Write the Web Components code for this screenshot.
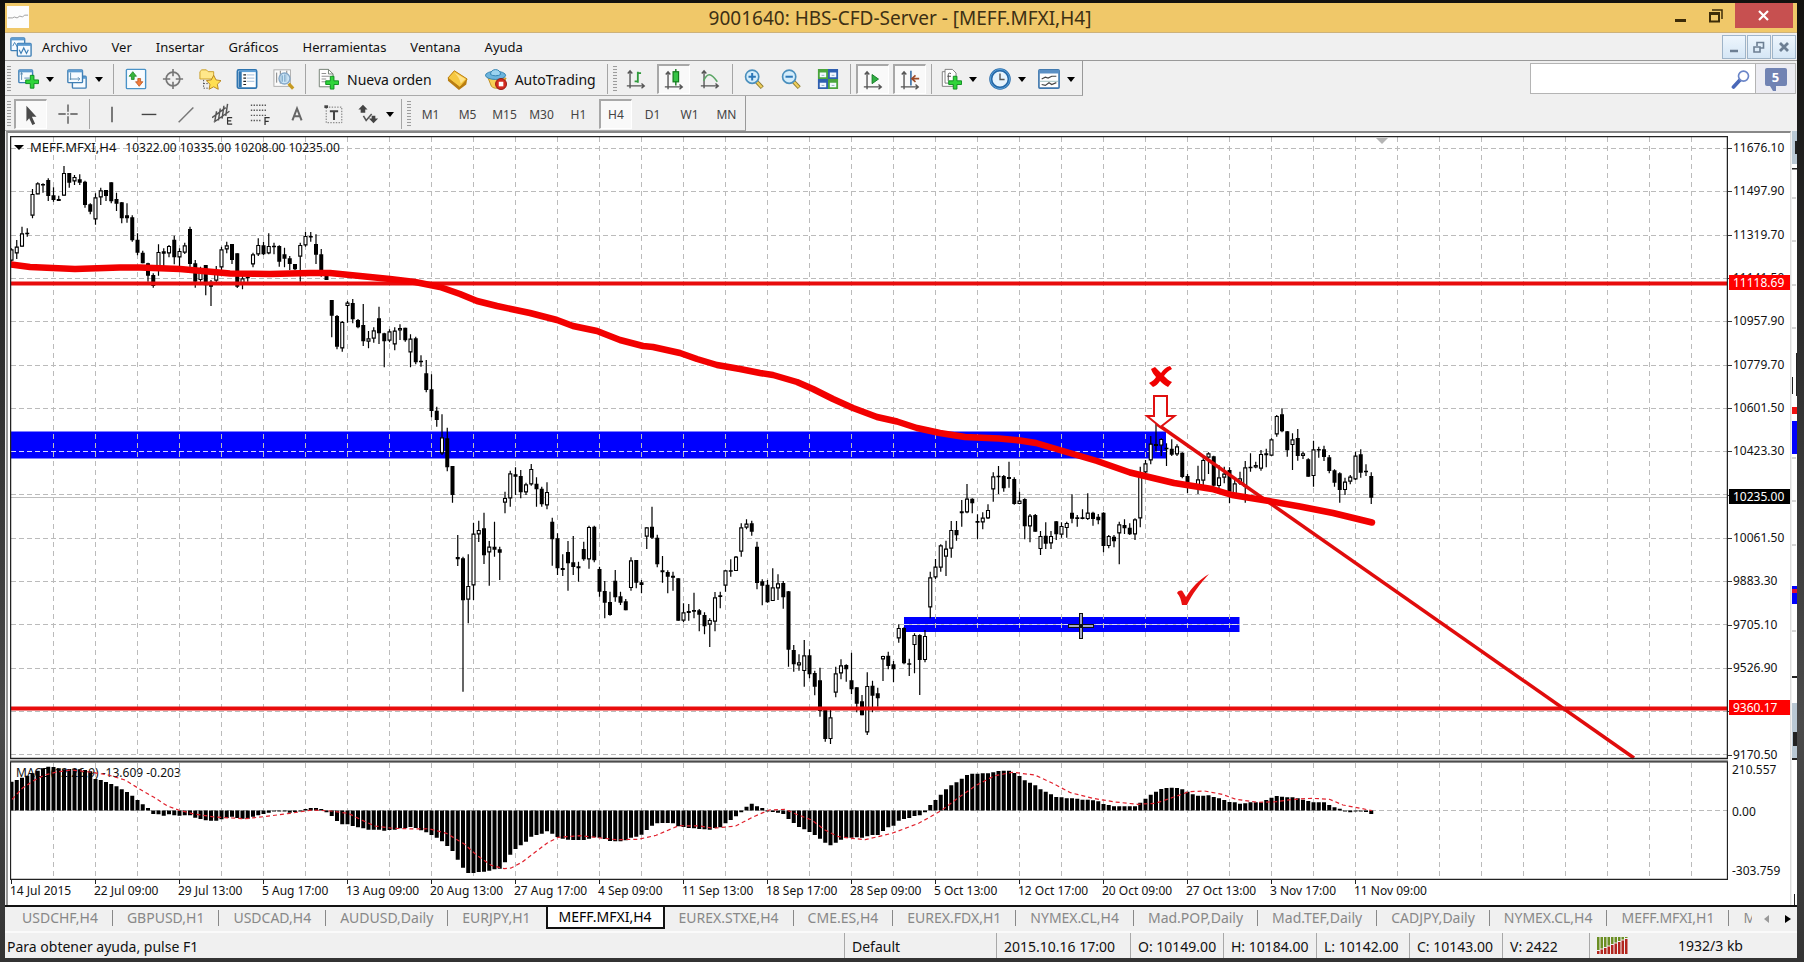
<!DOCTYPE html>
<html lang="es">
<head>
<meta charset="utf-8">
<title>9001640: HBS-CFD-Server - [MEFF.MFXI,H4]</title>
<style>
html,body{margin:0;height:100%}
body{background:linear-gradient(#12110f,#2a2a2a 30%,#4a4a4a 75%,#333);font-family:"Noto Sans","Open Sans",sans-serif;color:#111}
</style>
</head>
<body>
<mt-window></mt-window>
<script>
const def=(name,html,init)=>customElements.define(name,class extends HTMLElement{
  constructor(){super();const t=document.createElement('template');t.innerHTML=html;
    this.attachShadow({mode:'open'}).append(t.content.cloneNode(true));}
  connectedCallback(){if(init&&!this.ready){this.ready=true;init(this,this.shadowRoot);}}
});

/* ---------- icons, all on a 24 x 24 grid ---------- */
const plus=(x,y)=>`<path transform="translate(${x} ${y})" d="M5 0h4v5h5v4h-5v5h-4v-5h-5v-4h5z" fill="#2fd43a" stroke="#0b8a1c"/>`;
const axes='<path d="M5.500 3v19M2 19.500h19M3 6l2.500-3 2.500 3M18 17l3 2.500-3 2.500" fill="none" stroke="#555" stroke-width="1.500"/>';
const lens=s=>`<path d="M14 14l7 7.500" stroke="#8c7a30" stroke-width="4.500"/><path d="M14.500 14.500l6 6.500" stroke="#f0cf5c" stroke-width="2.500"/><circle cx="10" cy="9.500" r="7.200" fill="#d4edfb" stroke="#4a8fbd" stroke-width="1.800"/><path d="${s}" stroke="#2d78b8" stroke-width="2.200"/>`;
const win=(x,y,w,h)=>`<rect x="${x}" y="${y}" width="${w}" height="${h}" rx="1" fill="#f6fbff" stroke="#3f7fb5" stroke-width="1.500"/><path d="M${x} ${y+1.5}h${w}" stroke="#5c9bd0" stroke-width="2.500"/>`;
const ICONS={
 app:'<rect width="24" height="24" fill="#fdfdfd"/><path d="M1 13h5l2-1 3 1 3-2 3 1 2-2h4" fill="none" stroke="#999"/>',
 doc:win(1,2,15,14)+'<path d="M3 11l2-4 3 5 2-4" fill="none" stroke="#3f7fb5"/>'+win(8,8,15,14)+'<path d="M10 15l2 4 3-6 3 6 2-4" fill="none" stroke="#3f7fb5" stroke-width="1.300"/>',
 newchart:win(2,2,15,14)+'<path d="M5 5v8M4 7l1-2 1 2M8 11h6" fill="none" stroke="#5487ad"/>'+plus(9.5,8),
 profiles:win(7,9,15,13)+win(2,2,16,14)+'<path d="M5 5v8M4 12h11M13 10l2 2-2 2" fill="none" stroke="#5487ad"/>',
 market:'<rect x="1.500" y="1.500" width="21" height="21" rx="1" fill="#f8fcff" stroke="#4a93c8" stroke-width="1.500"/><path d="M8.500 4l4 5h-2.500v3.500h-3v-3.500h-2.500z" fill="#38b53d" stroke="#16801d" stroke-width=".8"/><path d="M15.500 20l4-5h-2.500v-3.500h-3v3.500h-2.500z" fill="#f07d3e" stroke="#b84b12" stroke-width=".8"/>',
 target:'<circle cx="12" cy="12" r="7.500" fill="none" stroke="#777" stroke-width="1.800"/><path d="M12 1v8M12 15v8M1 12h8M15 12h8" stroke="#777" stroke-width="1.800"/>',
 folder:'<path d="M1 4l2-2h5l2 2h6v8h-15z" fill="#ffe88a" stroke="#c79b22"/><path d="M5 13v9h6M5 17h6" fill="none" stroke="#444" stroke-dasharray="1.500 1.500"/><path d="M16 8l2.600 5 5.400.8-4 3.900 1 5.500-5-2.700-5 2.700 1-5.500-4-3.900 5.400-.8z" fill="#ffdf52" stroke="#b5811a"/>',
 list:'<rect x="1.500" y="2" width="21" height="20" rx="1.500" fill="#fff" stroke="#2f75b0" stroke-width="1.800"/><path d="M3 3.500h19" stroke="#5fa1d8" stroke-width="2"/><path d="M4.500 4v17" stroke="#2f75b0" stroke-width="3.500"/><path d="M8 7.500h3M8 11h3M8 14.500h3M8 18h3" stroke="#222" stroke-width="1.300"/><path d="M12 7.500h8M12 11h8M12 14.500h8" stroke="#b5cbe2" stroke-width="1.300"/>',
 tester:'<rect x="1" y="2" width="18" height="18" fill="#fbfbfb" stroke="#aaa"/><path d="M4 5v11M8 3v14M15 3v12" stroke="#777"/><path d="M17 17l5 5.500" stroke="#c79b22" stroke-width="3.500"/><circle cx="12.500" cy="11.500" r="6" fill="#bfe0f8" fill-opacity=".8" stroke="#85a8c8" stroke-width="1.500"/><path d="M10 8v7M13 7v8" stroke="#5e8fb5"/>',
 order:'<path d="M2.500 1.500h10l5 5v14h-15z" fill="#fff" stroke="#6d7a6d"/><path d="M12.500 1.500v5h5" fill="none" stroke="#6d7a6d"/><path d="M5 6h5M5 9h9M5 12h5M5 15h4" stroke="#888"/>'+plus(9.5,9),
 gold:'<path d="M8 3l14 9-1 6-8 6-12-10v-3z" fill="#b97d10"/><path d="M8 3l14 9-8 9-13-10z" fill="#f6c842" stroke="#b97d10"/><path d="M8 5l12 7-5 5c-1-5-4-9-7-12z" fill="#ffe38a"/>',
 auto:'<path d="M3 10l4 10c3 3 9 3 12-1l4-8z" fill="#f7cf56" stroke="#bb8a1f"/><ellipse cx="11.500" cy="8" rx="11" ry="4.500" fill="#6bb4dd" stroke="#2f7fae"/><path d="M6 7c0-7 11-7 11 0-2 2-9 2-11 0z" fill="#9bd3f0" stroke="#2f7fae"/><circle cx="17.500" cy="17.500" r="6" fill="#d32b20" stroke="#8f140c"/><rect x="15" y="15" width="5" height="5" fill="#fff"/>',
 bars:axes+'<path d="M14 4v12M10.500 14.500h3.500M14 5.500h3.500" stroke="#2f9a3c" stroke-width="2" fill="none"/>',
 candle:axes+'<path d="M14 0v18" stroke="#127a1c" stroke-width="1.500"/><rect x="11" y="3" width="6" height="11" fill="#35c445" stroke="#127a1c" stroke-width="1.300"/>',
 line:axes+'<path d="M5 14c4-9 8-9 15 1" stroke="#5aa564" stroke-width="1.700" fill="none"/>',
 zoomin:lens('M6 9.500h8M10 5.500v8'),zoomout:lens('M6 9.500h8'),
 tile:'<path fill="#4aa53c" d="M1 1h11v11h-11zM12 12h11v11h-11z"/><path fill="#2f5fb0" d="M12 1h11v11h-11zM1 12h11v11h-11z"/><path fill="#f3f9ff" d="M3 5h7v5h-7zM14 5h7v5h-7zM3 16h7v5h-7zM14 16h7v5h-7z"/><path d="M5 8h3M16 8h3M5 19h3M16 19h3" stroke="#8ab"/>',
 scroll:axes+'<path d="M11 6l7 5-7 5z" fill="#2fb042" stroke="#147a24"/>',
 shift:axes+'<path d="M13 2v16" stroke="#3a6ea5" stroke-width="1.800"/><path d="M22 10.500h-7M18 7l-4 3.500 4 3.500" stroke="#9c4a26" stroke-width="1.800" fill="none"/>',
 indic:'<path d="M5.500 4h-3v16h12v-5" fill="#fff" stroke="#777"/><path d="M5.500 1.500h8l4 4v11h-12z" fill="#fff" stroke="#777"/><path d="M12 6c-3-1-3 0-3 3v5M8 9h4" stroke="#444" fill="none"/>'+plus(9.5,9),
 clock:'<circle cx="12" cy="12" r="10" fill="#e6f3fc" stroke="#2468a8" stroke-width="3.500"/><circle cx="12" cy="12" r="10.500" fill="none" stroke="#5fa6dd"/><path d="M12 6v6.500h5" stroke="#555" stroke-width="1.500" fill="none"/>',
 template:'<rect x="1" y="2" width="22" height="20" rx="1" fill="#fff" stroke="#3f77ad" stroke-width="1.800"/><path d="M1 4h22" stroke="#5a8fc4" stroke-width="4"/><path d="M4 12l4-2 3 1 4-2 5 0M4 18l4 1 4-3 3 2 5-2" stroke="#444" stroke-width="1.300" fill="none"/><path d="M2 14.500h20" stroke="#9bb"/>',
 cursor:'<path d="M7 2l11 12h-5l3.500 7.500-3 1.500-3.500-7.500-3 3.500z" fill="#4a4a4a"/>',
 cross:'<path d="M12 1.500v8M12 14.500v8M1.500 12h8M14.500 12h8" stroke="#555" stroke-width="1.500"/><path d="M12 11.200v1.600" stroke="#555" stroke-width="1.500"/>',
 vline:'<path d="M12 4v17" stroke="#444" stroke-width="1.500"/>',
 hline:'<path d="M4 12.500h16" stroke="#444" stroke-width="1.500"/>',
 trend:'<path d="M4 21l16-16" stroke="#777" stroke-width="1.600"/>',
 channel:'<path d="M0 16l15-11M2 21l17-12M5 9l-2 11M9 6l-2 13M13 3l-2 14M17 1l-2 13" stroke="#555" stroke-width="1.600"/><path d="M17 16h5M17 19.500h4M17 23h5M17 15.500v8" stroke="#333" stroke-width="1.300"/>',
 fibo:'<path d="M2 2.500h18M2 8h18M2 13.500h18M2 19h11" stroke="#555" stroke-width="1.600" stroke-dasharray="1.500 1.500"/><path d="M17.500 24v-8h5M17.500 20h4" stroke="#333" stroke-width="1.400" fill="none"/>',
 text:'<path d="M7 19l5-13 5 13M8.500 14.500h7" stroke="#666" stroke-width="2.200" fill="none"/>',
 label:'<rect x="3.500" y="4.500" width="17" height="17" fill="none" stroke="#666" stroke-dasharray="1.500 1.500"/><path d="M7.500 9h9M12 9v9.500" stroke="#444" stroke-width="2.200"/><rect x="1.500" y="2.500" width="4" height="3" fill="#444"/>',
 shapes:'<path d="M6.500 2l5 5-2.500 0v3.500h-5v-3.500h-2.500z" fill="#444"/><path d="M18 22l-5-5h3v-3h4v3h3z" fill="#444"/><path d="M7 14l3 5 6-7" stroke="#555" stroke-width="1.700" fill="none"/>',
 search:'<path d="M3 21.500l8-8.500" stroke="#4a68b8" stroke-width="4.500" stroke-linecap="round"/><circle cx="15" cy="8.500" r="6" fill="#fff" stroke="#6b86c8" stroke-width="2"/>',
};
def('tool-icon','<style>:host{display:block;width:22px;height:24px;flex:none}svg{display:block;width:100%;height:100%}</style><svg viewBox="0 0 24 24" aria-hidden="true"></svg>',
 (e,r)=>{r.querySelector('svg').innerHTML=ICONS[e.getAttribute('name')];});

def('tool-button',`<style>
:host{display:flex;width:37px;height:34px;flex:none}
:host([drop]){width:49px}:host([drop=narrow]){width:46px}:host([wide]){width:auto}
button{font:14px "Noto Sans",sans-serif;color:#111;flex:1;margin:1px;border:0;background:none;padding:0;display:flex;align-items:center;justify-content:center;gap:7px;white-space:nowrap}
:host([drop]) button{justify-content:flex-start;padding-left:4px}
:host([wide]) button{padding:0 7px;gap:8px}
:host([time]) button{font-size:12px;color:#444}
:host([pressed]) button{margin:2px;background:#f9f9f9;border-top:2px solid #a8a8a8;border-left:2px solid #a8a8a8;border-right:1px solid #fff;border-bottom:1px solid #fff}
i{display:none;border:4px solid transparent;border-top:5px solid #000;border-bottom:0}
:host([drop]) i{display:block}
</style><button type="button"><slot></slot><i></i></button>`,(e,r)=>{
 const n=e.getAttribute('icon'),b=r.querySelector('button');
 if(n){const ic=document.createElement('tool-icon');ic.setAttribute('name',n);b.prepend(ic);b.setAttribute('aria-label',e.textContent||e.getAttribute('label'));}
});
def('tool-sep','<style>:host{display:block;flex:none;width:1px;height:30px;margin:0 3px;background:#a5a5a5}</style>');
def('tool-grip','<style>:host{display:block;flex:none;width:4px;height:26px;margin:0 1px 0 2px;background:repeating-linear-gradient(#9c9c9c 0 1px,#eee 1px 3px)}</style>');
def('tool-bar',`<style>:host{display:flex;align-items:center;padding-top:2px;border-right:1px solid #999;border-bottom:1px solid #aaa}</style><slot></slot>`);

def('title-bar',`<style>
:host{display:flex;height:30px;background:#f0c869;border-bottom:1px solid #cdb27a;box-sizing:border-box;align-items:flex-start}
tool-icon{margin:2px 0 0 2px}
h1{flex:1;margin:0;padding-left:108px;text-align:center;font-size:19px;line-height:30px;font-weight:400;color:#3d3014;white-space:nowrap}
button{border:0;background:none;width:36px;height:25px;padding:0;display:grid;place-items:center}
.close{width:58px;background:#c75050;margin-right:4px}
</style><tool-icon name="app"></tool-icon><h1>9001640: HBS-CFD-Server - [MEFF.MFXI,H4]</h1>
<button aria-label="Minimizar"><svg width="12" height="14"><path d="M0 11.500h11" stroke="#3d2c08" stroke-width="3"/></svg></button>
<button aria-label="Restaurar"><svg width="16" height="14"><path d="M1 4h9v8.500h-9zM1 5h9" fill="none" stroke="#3d2c08" stroke-width="2"/><path d="M3 1h10v9" fill="none" stroke="#3d2c08" stroke-width="1.500"/></svg></button>
<button class="close" aria-label="Cerrar"><svg width="12" height="12"><path d="M1 1l9 9M10 1l-9 9" stroke="#fff" stroke-width="2.200"/></svg></button>`);

def('menu-bar',`<style>
:host{display:flex;height:28px;align-items:center;padding-left:5px;border-bottom:1px solid #999;box-sizing:border-box;gap:1px}
nav{flex:1;display:flex;gap:24px;margin-left:9px}
nav button{font:13px "Noto Sans",sans-serif;color:#111;border:0;background:none;padding:0}
.mdi{width:24px;height:24px;border:1px solid #9fb4c8;background:linear-gradient(#eef6fd,#d5e6f5);padding:0;display:grid;place-items:center}
.mdi:last-child{margin-right:1px}
</style><tool-icon name="doc"></tool-icon>
<nav><button>Archivo</button><button>Ver</button><button>Insertar</button><button>Gráficos</button><button>Herramientas</button><button>Ventana</button><button>Ayuda</button></nav>
<button class="mdi" aria-label="Minimizar gráfico"><svg width="12" height="12"><path d="M2 10h8" stroke="#6d7f93" stroke-width="2.500"/></svg></button>
<button class="mdi" aria-label="Restaurar gráfico"><svg width="12" height="12"><path d="M1 6h6v5h-6zM4 5v-3.500h6.500v5.500h-3" fill="none" stroke="#6d7f93" stroke-width="1.600"/></svg></button>
<button class="mdi" aria-label="Cerrar gráfico"><svg width="12" height="12"><path d="M2 2l8 8M10 2l-8 8" stroke="#6d7f93" stroke-width="2.800"/></svg></button>`);

def('search-box',`<style>
:host{display:flex;width:266px;height:31px;box-sizing:border-box;margin:2px 1px 0 0;border:1px solid #b4b4b4}
label{flex:1;min-width:0;display:flex;align-items:center;background:#fff;padding-right:4px}
input{flex:1;min-width:0;border:0;outline:0;padding:0 6px;font:14px "Noto Sans",sans-serif}
tool-icon{width:20px;height:20px}
button{width:40px;flex:none;border:0;border-left:1px solid #b4b4b4;background:#ececf2;padding:0;display:grid;place-items:center}
span{position:relative;display:block;width:22px;border-radius:2px;background:#7183b3;color:#fff;font:700 13px/18px "Noto Sans",sans-serif;margin-bottom:4px}
span::after{content:"";position:absolute;left:5px;top:100%;border:3px solid transparent;border-top:5px solid #7183b3;border-right-color:#7183b3;border-bottom:0}
</style><label><input type="text" aria-label="Buscar"><tool-icon name="search"></tool-icon></label><button aria-label="Mensajes: 5"><span>5</span></button>`);

/* ---------- market data: high, open/close top, bottom, low; trailing letter w = hollow body ----------
   Levels are thirds of a pixel, measured down from each block's own origin. */
const CANDLES=[[130,`355 358 392 395w,330 350 370 387w,290 310 350 350w,295 308 312 320,177 192 257 265w,157 160 193 193w,160 162 166 188,145 150 198 213,172 196 210 215,197 207 213 213,108 129 197 197w,129 129 158 173,135 141 154 165w,133 148 158 165,152 155 225 233,220 223 245 253,190 202 268 284w,173 181 202 225w,180 180 198 213,157 157 214 220,188 207 221 243,216 217 265 280,220 256 265 278,256 262 331 335,310 329 368 376,362 368 400 400,398 400 437 455,430 435 468 473,343 366 420 437w,355 364 371 410,345 348 370 382w,317 329 382 403,355 363 382 408w,338 346 368 372w,290 297 402 413,390 400 455 473,410 425 450 455w,405 405 466 496,450 455 470 528,408 430 452 458w,350 358 412 430w,335 346 358 370w,342 342 390 402,370 370 470 474,438 445 462 478w,430 440 445 455,368 373 403 412w,325 345 373 378w,335 346 373 375,310 348 370 373w,338 347 350 373,346 348 395 410,353 373 386 412,378 385 402 420,402 402 418 420,338 345 380 455w,306 318 346 350w,306 318 321 335,313 342 374 402,357 373 420 440,435 435 450 450,510 510 557 622,555 558 650 658,573 576 655 665w,513 518 528 578w,507 519 568 580,567 570 592 595,522 585 634 648,603 625 635 655w,592 601 626 638w,530 565 610 642,608 610 634 712,598 604 632 637w,592 602 643 661w,583 594 601 630w,593 593 631 635,613 626 667 712w,620 625 697 703,676 692 697 710,690 730 780 787,733 778 843 862,830 842 870 890,853 922 970 975w,893 925 1012 1024`],
[390,`228 228 315 338,435 501 508 528,500 505 631 905,493 588 629 700w,398 431 586 630w,392 420 433 456w,368 415 496 522,453 470 487 587w,395 470 479 500,470 478 488 570,305 324 338 370w,242 250 325 350w,232 253 260 315,240 258 307 325,278 283 307 315w,222 237 283 287w,262 281 298 350,290 296 343 350,277 306 346 358w,383 395 448 527,430 445 535 555,493 534 540 558,453 486 520 602,438 517 531 555,515 529 535 575,455 477 508 512,407 411 508 536w,407 410 511 517,530 537 605 620,573 603 638 685,605 636 675 677,540 572 622 635,605 619 638 645,627 634 661 661,502 511 594 602w,510 510 578 595,570 577 585 610,412 412 440 477w,350 410 443 447,434 443 523 532,498 541 547 578,541 546 560 610,545 557 563 602,565 565 692 692,640 667 692 697w,642 663 669 692,608 660 665 685,657 661 674 724,667 675 709 733,685 690 704 771w,606 622 695 724w,605 616 621 655,540 541 587 605w,508 541 544 560,498 500 543 543w,400 412 485 500w,388 401 413 418w,392 400 425 437,455 470 579 598,568 574 587 646,570 584 637 638,535 592 633 633w,553 580 595 630w,573 579 622 656,603 604 779 830,765 780 823 845,793 817 826 842w,750 796 843 890w,778 796 853 865,842 849 890 916,833 871 963 980,960 960 1047 1055,960 982 1047 1062w,830 850 908 922w,808 826 850 868w,823 825 838 875,788 871 898 913,892 892 941 967,915 934 976 976,847 888 1027 1035w,872 887 917 967,893 910 925 950,797 798 808 873w,785 797 828 838,813 823 838 877,703 714 745 758w,712 714 820 823,806 820 824 858,730 735 765 850w,733 735 810 915`],
[350,`840 858 930 937w,665 682 772 805w,627 650 682 687w,583 586 653 665w,572 596 620 678w,513 540 596 623w,513 540 556 572,450 484 490 530,402 446 487 490w,445 446 460 490,493 513 518 568,487 503 517 538w,463 480 505 507w,367 379 418 455w,348 377 381 432,375 378 415 425,335 381 387 413,382 387 462 464,425 452 462 463w,445 447 529 568,492 497 529 577w,492 495 545 545,543 558 597 615w,517 557 581 597,543 558 580 597w,513 514 553 570,517 528 554 563w,515 519 534 563w,433 488 506 520,495 502 507 530,478 502 507 508,430 488 507 510w,485 488 507 527,492 500 511 523,487 488 588 607,555 558 588 595w,555 560 574 592,515 523 550 643w,508 525 535 552,520 533 553 555,505 508 553 570w,350 380 505 532w,330 340 367 370w,258 281 331 343w,215 282 288 305,265 267 287 318w,280 293 297 348,268 296 314 318,283 289 313 318w,307 308 381 385,372 378 402 430,400 404 410 412,347 388 407 432w,325 330 392 410w,307 310 323 372w,317 319 407 410,345 382 408 420w,350 371 383 400w,352 360 425 460,390 400 432 432w,365 385 400 405w,333 352 410 458w,310 350 354 365,335 345 352 355w,300 312 356 362w,296 310 316 352,265 268 317 318w,195 198 253 260w,175 193 244 247,243 244 301 320,250 268 285 360w,237 264 318 332,305 310 318 327w,325 328 380 380,272 298 378 410w,290 297 301 323,287 298 321 333,315 322 363 370,358 361 398 410,367 370 420 458,383 395 420 435w,375 380 395 403w,305 317 388 390w,298 313 368 383,343 362 366 378,367 378 443 462`]];
const X0=11.5,STEP=5.25;
const drawCandles=()=>{let i=0,w='',b='',h='';
 for(const [o,rows] of CANDLES)for(const row of rows.split(',')){
  const [hi,t,bt,lo]=row.replace('w','').split(' ').map(v=>o+v/3),x=X0+STEP*i++;
  w+=`M${x} ${hi}V${Math.max(lo,bt)}`;
  if(row.endsWith('w'))h+=`M${x-1.5} ${t+.5}h3V${bt-.5}h-3z`;
  else b+=`M${x-2} ${t}h4v${Math.max(bt-t,1.5)}h-4z`;}
 return `<path d="${w}" stroke="#000" stroke-width="1.200"/><path d="${b}" fill="#000"/><path d="${h}" fill="#fff" stroke="#000" stroke-width="1.100"/>`;};
const vgrid=(y1,y2)=>{let d='';for(let x=53.5;x<1727;x+=42)d+=`M${x} ${y1}V${y2}`;return `<path d="${d}" stroke="#bbb" stroke-dasharray="5 4" fill="none"/>`;};
const MA='11,264.5 30,267 75,269 120,267.5 140,267.5 180,269 230,273.5 270,274 310,273 330,273 360,276 390,279 415,282 440,287 460,294 477,301 497,306 530,313 557,320 573,326 597,331 620,340 643,346 653,347 680,353 697,359 717,365 740,369 760,373 773,375 797,382 813,389 833,399 853,408 877,417 897,421.5 917,428 940,433 965,437 999,438.500 1020,440.500 1036,443 1063,451 1097,461 1130,472.500 1174,483 1212,489 1232,495 1266,500.500 1300,506.500 1333,513 1372,522.500';

def('price-chart',`<style>
:host{display:block;position:relative;min-height:0;background:#fff}
svg{position:absolute;inset:0;width:100%;height:100%;display:block}
header{position:absolute;left:4px;top:3px;display:flex;align-items:center;gap:6px;font-size:12px;line-height:17px;white-space:pre}
header b{font-weight:400;font-size:13px;padding-right:3px}
i{border:5px solid transparent;border-top:5px solid #000;border-bottom:0}
</style><svg viewBox="10 136 1718 624" preserveAspectRatio="none" role="img" aria-label="MEFF.MFXI,H4"></svg>
<header><i></i><b>MEFF.MFXI,H4</b><span>10322.00 10335.00 10208.00 10235.00</span></header>`,(e,r)=>{
 let g='';for(let k=0;k<15;k++)g+=`M11 ${148.5+Math.round(43.3*k)}H1727`;
 r.querySelector('svg').innerHTML=`
 <path d="M11 431.500H1166V458.500H11zM904 617H1239.500V632H904z" fill="#00f"/>
 ${vgrid(137,758)}<path d="${g}" stroke="#bbb" stroke-dasharray="5 3"/>
 <path d="M11 451.500H1166M904 624.500H1239" stroke="#d8d8ff" stroke-width="1.200" stroke-dasharray="5 3"/>
 <path d="M11 497.500H1727" stroke="#bdbdbd"/>
 ${drawCandles()}
 <path d="M11 283.500H1727M11 708.500H1727" stroke="#e80c0c" stroke-width="4"/>
 <path d="M1157 424L1634 758" stroke="#e00c0c" stroke-width="3.500"/>
 <polyline points="${MA}" fill="none" stroke="#f20000" stroke-width="6.500" stroke-linecap="round" stroke-linejoin="round"/>
 <path d="M1154 396h13v20h7.500l-14 11-13.500-11h7z" fill="#fff" stroke="#e01010" stroke-width="2"/>
 <path d="M1151 369l4-2 6 6c2-3 5-6 9-7l2 3c-4 2-6 4-8 7 3 3 5 5 8 6l-4 5c-4-2-6-4-8-6-2 3-4 5-7 6l-4-4c4-2 6-4 7-6-2-2-4-5-5-8z" fill="#f00000"/>
 <path d="M1177 593c2-3 5-3 6-1l3 5c6-10 13-17 23-23-9 10-17 20-22 31h-5c-1-5-2-9-5-12z" fill="#e81010"/>
 <path d="M1081 613v26M1068 626h26" stroke="#111" stroke-width="4"/><path d="M1081 614v10M1081 628v10M1069 626h10M1083 626h10" stroke="#d8dcff" stroke-width="1.500"/>
 <path d="M1376 138h12l-6 6z" fill="#b4b4b4"/>
 <path d="M10.500 136.500H1727.500V758.500H10.500z" fill="none" stroke="#222" stroke-width="1.500"/>`;
});

def('price-axis',`<style>
:host{display:flex;position:relative;flex-direction:column;justify-content:space-between;padding-top:7px;font-size:12px;line-height:10px;background:#fff;white-space:nowrap}
div{height:10px;padding-left:5px;background:linear-gradient(#333,#333) 0 5px/4px 1px no-repeat}
mark{position:absolute;left:1px;right:0;padding-left:4px;line-height:15px;color:#fff;background:#f00}
.now{background:#000}
</style>`,(e,r)=>{for(const v of ['11676.10','11497.90','11319.70','11141.50','10957.90','10779.70','10601.50','10423.30','','10061.50','9883.30','9705.10','9526.90','','9170.50']){const d=document.createElement('div');d.textContent=v;r.append(d);}
 for(const [v,y,c] of [['11118.69',139,''],['10235.00',353,'now'],['9360.17',564,'']]){const m=document.createElement('mark');m.textContent=v;m.className=c;m.style.top=y/6.24+'%';r.append(m);}});

const HIST='125 120 113 107 100 92 85 80 81 85 88 87 87 88 90 94 117 120 126 132 139 148 156 167 180 193 204 222 223 227 223 226 227 226 226 233 237 241 242 242 238 234 230 234 236 236 230 226 222 218 214 214 214 218 216 214 207 204 204 207 217 228 243 253 253 258 262 265 269 269 269 272 270 269 265 264 261 264 271 277 285 293 304 318 333 359 383 399 399 396 395 392 388 386 367 344 327 316 305 290 285 281 274 281 291 296 299 300 300 300 296 292 293 297 303 304 304 301 293 290 284 270 257 250 249 249 250 259 261 264 265 267 268 269 264 262 250 240 229 217 200 191 199 204 213 216 218 222 237 249 261 268 276 285 296 308 316 308 299 294 293 292 293 289 285 285 273 262 257 242 237 234 228 226 217 195 180 164 148 136 127 116 105 101 101 100 100 97 93 92 92 99 108 121 128 136 148 155 163 171 172 175 175 176 179 179 181 184 192 195 199 199 199 199 199 188 176 164 155 147 144 143 144 148 155 163 167 167 166 171 175 180 186 187 191 190 187 187 187 180 173 168 170 172 172 175 179 183 187 187 187 195 202 206 210 217 214 214 216 222'.split(' ');
const SIG='27,178 50,145 75,122 100,105 130,95 160,90 200,96 240,104 280,120 310,145 345,172 375,198 400,210 435,222 480,231 520,234 550,236 590,230 650,220 700,210 740,213 780,220 810,240 840,258 880,265 930,267 960,266 1000,280 1040,312 1070,348 1100,376 1130,386 1145,384 1170,366 1200,335 1225,310 1250,292 1300,287 1340,293 1380,299 1430,298 1470,286 1520,257 1568,258 1598,265 1648,258 1688,230 1723,210 1758,208 1783,222 1818,240 1848,270 1878,290 1908,295 1938,299 1998,280 2058,250 2108,212 2148,172 2188,135 2228,107 2268,97 2318,105 2358,130 2398,158 2448,175 2498,186 2548,193 2588,190 2628,172 2663,155 2698,153 2738,163 2768,178 2818,187 2858,185 2898,178 2938,175 2978,178 3008,195 3048,205 3073,212';
def('macd-chart',`<style>
:host{display:block;position:relative;background:#fff}
svg{position:absolute;inset:0;width:100%;height:100%}
p{margin:0;position:absolute;left:6px;top:4px;font-size:12px;line-height:17px}
</style><p>MACD(12,26,9) -13.609 -0.203</p><svg viewBox="10 760 1718 120" preserveAspectRatio="none" role="img" aria-label="MACD"></svg>`,(e,r)=>{
 let d='';HIST.forEach((v,i)=>{const x=X0+STEP*i,y=740+v/3;d+=`M${x} 810.500V${Math.abs(y-810.5)<1?811.5:y}`;});
 const s=SIG.split(' ').map(p=>{const [a,b]=p.split(',');return (a/2.24).toFixed(1)+','+(740+b/3).toFixed(1);}).join(' ');
 r.querySelector('svg').innerHTML=`${vgrid(763,879)}<path d="M11 810.500H1727" stroke="#bbb" stroke-dasharray="5 3"/>
 <path d="${d}" stroke="#000" stroke-width="4"/><polyline points="${s}" fill="none" stroke="#e0202c" stroke-width="1.200" stroke-dasharray="4 3"/>
 <path d="M10 760.500H1728" stroke="#999" stroke-width="2"/><path d="M10.500 761.800H1727.500V879.300H10.500z" fill="none" stroke="#222" stroke-width="1.300"/>`;});
def('macd-axis',`<style>:host{display:flex;flex-direction:column;justify-content:space-between;font-size:12px;line-height:16px;padding:2px 0 1px 4px;background:#fff}
span:nth-of-type(2){padding-bottom:18px}</style><span>210.557</span><span>0.00</span><span>-303.759</span>`);
def('time-axis',`<style>
:host{display:grid;grid-template-columns:repeat(20,minmax(0,84fr)) minmax(0,38fr);background:#fff;font-size:12px;line-height:16px}
span{white-space:nowrap;padding-top:3px;background:linear-gradient(#222,#222) 1px 0/1px 4px no-repeat}
</style>`,(e,r)=>{for(const t of ['14 Jul 2015','22 Jul 09:00','29 Jul 13:00','5 Aug 17:00','13 Aug 09:00','20 Aug 13:00','27 Aug 17:00','4 Sep 09:00','11 Sep 13:00','18 Sep 17:00','28 Sep 09:00','5 Oct 13:00','12 Oct 17:00','20 Oct 09:00','27 Oct 13:00','3 Nov 17:00','11 Nov 09:00']){const s=document.createElement('span');s.textContent=t;r.append(s);}});

def('chart-window',`<style>
:host{display:flex;flex:1;min-height:400px;background:#f0f0f0}
section{flex:1;display:grid;grid-template-columns:minmax(0,1fr) 62px;grid-template-rows:minmax(0,1fr) 120px 25px;margin-left:1px;border-left:2px solid #999;border-top:2px solid #888;padding:3px 0 0 2px;background:#fff;border-right:1px solid #ddd}
time-axis{grid-column:1/3;margin-right:62px}
svg{width:5px;height:100%;margin-left:1px;background:#fff}
</style><section><price-chart></price-chart><price-axis></price-axis><macd-chart></macd-chart><macd-axis></macd-axis><time-axis></time-axis></section>
<svg viewBox="0 131 5 774" preserveAspectRatio="none" aria-hidden="true"><path d="M0 131h5v33h-5zM0 703h5v55h-5z" fill="#b9c8d4"/><path d="M3 141h2v13h-2zM0 168h5v1.500h-5zM0 377h1v17h-1zM4 353h1v43h-1zM0 676h5v2h-5zM1 732h4v14h-4zM0 758h5v2h-5zM2 894h1v11h-1z" fill="#222"/><path d="M0 407h5v7h-5z" fill="#f01010"/><path d="M0 421h5v33h-5zM0 586h5v18h-5z" fill="#00f"/><path d="M0 589h5v4h-5z" fill="#e01030"/><path d="M0 198h4M0 241h4M0 285h4M0 328h4M0 458h4M0 501h4M0 545h4M0 631h4" stroke="#aaa"/></svg>`);

def('chart-tabs',`<style>
:host{display:flex;height:26px;border-top:2px solid #111;box-sizing:border-box;overflow:hidden;align-items:flex-start;padding-left:3px}
div{flex:1;min-width:0;display:flex;overflow:hidden}
button{font:14px/16px "Noto Sans",sans-serif;color:#888;border:0;background:none;border-right:1px solid #888;margin-top:3px;height:16px;padding:0 14px;white-space:nowrap;flex:none}
button:last-child{border:0;padding-right:0}
.before{border-color:transparent}
[aria-selected=true]{background:#fff;color:#000;border:2px solid #111;border-top:0;margin:0;height:22px;padding:0 11px}
nav{display:flex;gap:16px;padding:8px 6px 0 12px}
i{border:4px solid transparent;border-left:6px solid #000;border-right:0}
i.l{border-left:0;border-right:5px solid #999}
</style><div role="tablist"></div><nav aria-hidden="true"><i class="l"></i><i></i></nav>`,(e,r)=>{
 for(const t of ['USDCHF,H4','GBPUSD,H1','USDCAD,H4','AUDUSD,Daily','EURJPY,H1','MEFF.MFXI,H4','EUREX.STXE,H4','CME.ES,H4','EUREX.FDX,H1','NYMEX.CL,H4','Mad.POP,Daily','Mad.TEF,Daily','CADJPY,Daily','NYMEX.CL,H4','MEFF.MFXI,H1','M']){
  const b=document.createElement('button');b.textContent=t;b.setAttribute('role','tab');b.setAttribute('aria-selected',t=='MEFF.MFXI,H4');if(t=='EURJPY,H1')b.className='before';r.querySelector('div').append(b);}});

def('status-bar',`<style>
:host{display:flex;height:27px;border-top:2px solid #fafafa;box-sizing:border-box;font-size:14px;line-height:27px;white-space:nowrap}
span{box-sizing:border-box;border-left:1px solid #a8a8a8;padding-left:7px;width:93px;height:25px;flex:none}
.help{flex:1;border:0;padding-left:2px}.profile{width:152px}.date{width:134px}.vol{width:87px}
.net{width:208px;display:flex;align-items:center;gap:49px}
svg{flex:none}
</style><span class="help">Para obtener ayuda, pulse F1</span><span class="profile">Default</span><span class="date">2015.10.16 17:00</span><span>O: 10149.00</span><span>H: 10184.00</span><span>L: 10142.00</span><span>C: 10143.00</span><span class="vol">V: 2422</span>
<span class="net"><svg width="32" height="17" aria-hidden="true"></svg>1932/3 kb</span>`,(e,r)=>{
 let s='';for(let i=0;i<9;i++){const x=i*3.5,y=14-i*1.5;s+=`<rect x="${x}" y="0" width="2.500" height="${y-1}" fill="#6b8e23"/><rect x="${x}" y="${y}" width="2.500" height="${17-y}" fill="#b3261e"/>`;}
 r.querySelector('svg').innerHTML=s;});

def('mt-window',`<style>
:host{display:flex;flex-direction:column;box-sizing:border-box;min-height:100vh;padding:3px 7px 4px 5px}
main{flex:1;display:flex;flex-direction:column;background:#f0f0f0}
.row{display:flex;justify-content:space-between;align-items:stretch;height:35px}
search-box{align-self:flex-start}
</style><main>
<title-bar></title-bar><menu-bar></menu-bar>
<div class="row"><tool-bar><tool-grip></tool-grip>
<tool-button icon="newchart" label="Nuevo gráfico" drop></tool-button><tool-button icon="profiles" label="Perfiles" drop></tool-button><tool-sep></tool-sep>
<tool-button icon="market" label="Observación del mercado"></tool-button><tool-button icon="target" label="Ventana de datos"></tool-button><tool-button icon="folder" label="Navegador"></tool-button><tool-button icon="list" label="Terminal"></tool-button><tool-button icon="tester" label="Probador"></tool-button><tool-sep></tool-sep>
<tool-button icon="order" wide>Nueva orden</tool-button><tool-button icon="gold" label="MetaEditor"></tool-button><tool-button icon="auto" wide>AutoTrading</tool-button><tool-sep></tool-sep><tool-grip></tool-grip>
<tool-button icon="bars" label="Barras"></tool-button><tool-button icon="candle" label="Velas" pressed></tool-button><tool-button icon="line" label="Línea"></tool-button><tool-sep></tool-sep>
<tool-button icon="zoomin" label="Acercar"></tool-button><tool-button icon="zoomout" label="Alejar"></tool-button><tool-button icon="tile" label="Mosaico"></tool-button><tool-sep></tool-sep>
<tool-button icon="scroll" label="Desplazamiento automático" pressed></tool-button><tool-button icon="shift" label="Desplazar gráfico" pressed></tool-button><tool-sep></tool-sep>
<tool-button icon="indic" label="Indicadores" drop></tool-button><tool-button icon="clock" label="Períodos" drop></tool-button><tool-button icon="template" label="Plantillas" drop></tool-button></tool-bar>
<search-box></search-box></div>
<div class="row"><tool-bar><tool-grip></tool-grip>
<tool-button icon="cursor" label="Cursor" pressed></tool-button><tool-button icon="cross" label="Cruz"></tool-button><tool-sep></tool-sep>
<tool-button icon="vline" label="Línea vertical"></tool-button><tool-button icon="hline" label="Línea horizontal"></tool-button><tool-button icon="trend" label="Línea de tendencia"></tool-button><tool-button icon="channel" label="Canal equidistante"></tool-button><tool-button icon="fibo" label="Fibonacci"></tool-button><tool-button icon="text" label="Texto"></tool-button><tool-button icon="label" label="Etiqueta"></tool-button><tool-button icon="shapes" label="Flechas" drop="narrow"></tool-button><tool-sep></tool-sep><tool-grip></tool-grip>
<tool-button time>M1</tool-button><tool-button time>M5</tool-button><tool-button time>M15</tool-button><tool-button time>M30</tool-button><tool-button time>H1</tool-button><tool-button time pressed>H4</tool-button><tool-button time>D1</tool-button><tool-button time>W1</tool-button><tool-button time>MN</tool-button></tool-bar></div>
<chart-window></chart-window><chart-tabs></chart-tabs><status-bar></status-bar></main>`);
</script>
</body>
</html>
